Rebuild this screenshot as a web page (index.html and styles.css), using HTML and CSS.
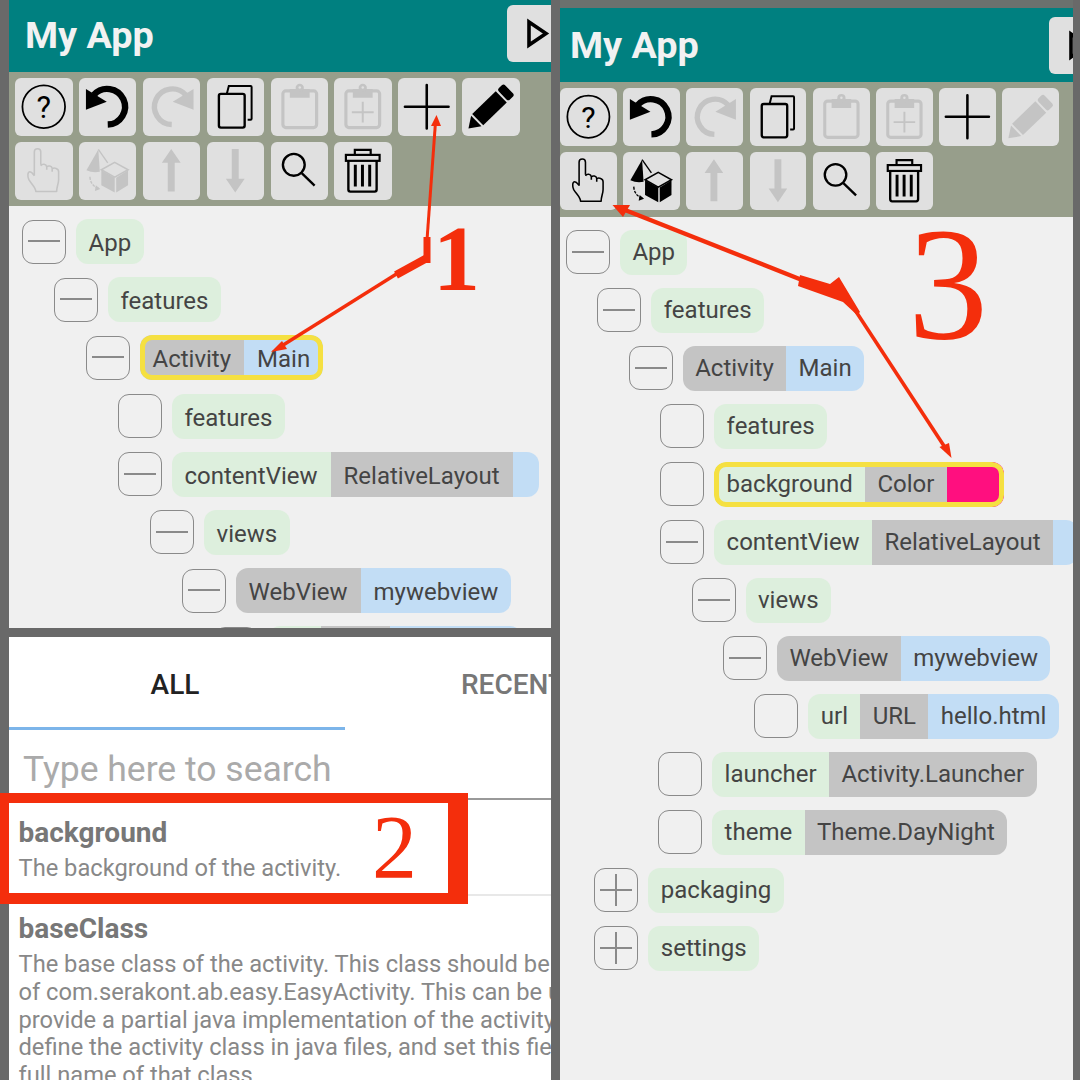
FILE: index.html
```html
<!DOCTYPE html>
<html lang="en">
<head>
    <meta charset="UTF-8" />
    <title>My App - adding a background</title>
    <link rel="stylesheet" href="styles.css">
</head>
<body>

<!-- shared toolbar icons -->
<svg class="defs" width="0" height="0">
    <symbol id="ic-help" viewBox="0 0 58 58">
        <circle cx="29" cy="29" r="21.5" fill="none" stroke="currentColor" stroke-width="1.8"/>
        <text x="29" y="40" text-anchor="middle" font-family="Roboto, sans-serif" font-size="31" fill="currentColor">?</text>
    </symbol>
    <symbol id="ic-undo" viewBox="0 0 58 58">
        <path d="M15 17 A18 18 0 1 1 29 47" fill="none" stroke="currentColor" stroke-width="6.5"/>
        <path d="M7 11 V32 L28 24 Z" fill="currentColor"/>
    </symbol>
    <symbol id="ic-redo" viewBox="0 0 58 58">
        <path d="M43 17 A18 18 0 1 0 29 47" fill="none" stroke="currentColor" stroke-width="5.5"/>
        <path d="M51 11 V32 L30 24 Z" fill="currentColor"/>
    </symbol>
    <symbol id="ic-copy" viewBox="0 0 58 58">
        <rect x="12" y="16" width="26" height="34" rx="2" fill="none" stroke="currentColor" stroke-width="2.4"/>
        <path d="M20 16 L22 8 H44 Q45 8 45 9 V41 Q45 42 44 42 H41" fill="none" stroke="currentColor" stroke-width="2"/>
    </symbol>
    <symbol id="ic-paste" viewBox="0 0 58 58">
        <rect x="12" y="13" width="34" height="37" rx="3" fill="none" stroke="currentColor" stroke-width="3.2"/>
        <path d="M19 11 H39 V20 H19 Z" fill="currentColor"/>
        <circle cx="29" cy="10" r="4.2" fill="currentColor"/>
        <circle cx="29" cy="9.5" r="1.3" fill="#e0e0e0"/>
    </symbol>
    <symbol id="ic-paste-add" viewBox="0 0 58 58">
        <rect x="12" y="13" width="34" height="37" rx="3" fill="none" stroke="currentColor" stroke-width="3.2"/>
        <path d="M19 11 H39 V20 H19 Z" fill="currentColor"/>
        <circle cx="29" cy="10" r="4.2" fill="currentColor"/>
        <circle cx="29" cy="9.5" r="1.3" fill="#e0e0e0"/>
        <path d="M29 24 V45 M18 34.5 H40" fill="none" stroke="currentColor" stroke-width="2"/>
    </symbol>
    <symbol id="ic-plus" viewBox="0 0 58 58">
        <path d="M29 7 V51 M7 29 H51" fill="none" stroke="currentColor" stroke-width="2.6" stroke-linecap="round"/>
    </symbol>
    <symbol id="ic-pencil" viewBox="0 0 58 58">
        <g transform="translate(6.5 51) rotate(-44)" fill="currentColor">
            <path d="M0 0 L11 -7.5 V7.5 Z"/>
            <rect x="13" y="-8" width="33" height="16"/>
            <rect x="48" y="-8" width="9" height="16" rx="2.5"/>
        </g>
    </symbol>
    <symbol id="ic-hand" viewBox="0 0 58 58">
        <path d="M19.5 34 V10 a3.2 3.2 0 0 1 6.5 0 V23 M26 24 c1.5 -2.5 5.5 -2 6 1 V28 M32 25 c1.5 -1.5 5 -1 5.5 1.5 V30 M37.5 27 c2 -1.5 6.5 -0.5 6.5 3 V38 c0 4 -2 7 -2 12 H21 c0 -4 -4 -7 -7 -12 c-1.5 -3 -1.5 -8 1 -8 c2 0 3 2 4.5 4" fill="none" stroke="currentColor" stroke-width="1.6" stroke-linejoin="round"/>
    </symbol>
    <symbol id="ic-cube" viewBox="0 0 58 58">
        <path d="M19.5 7.5 L7.5 28.5 Q14 31.5 21 30 Z" fill="currentColor"/>
        <path d="M19.5 7.5 L29 21" fill="none" stroke="currentColor" stroke-width="1.4"/>
        <path d="M11 35 Q11.5 44 20 47" fill="none" stroke="currentColor" stroke-width="1.4" stroke-dasharray="3 1.2"/>
        <path d="M21.5 47.5 L16 49.5 L17 43.5 Z" fill="currentColor"/>
        <path d="M22.5 28.5 L36 36 V51 L22.5 43.5 Z" fill="currentColor"/>
        <path d="M49.5 28.5 L37.5 36 V51 L49.5 43.5 Z" fill="currentColor"/>
        <path d="M36 20.5 L49.5 28 L36 35.5 L22.5 28 Z" fill="none" stroke="currentColor" stroke-width="1.6"/>
    </symbol>
    <symbol id="ic-up" viewBox="0 0 58 58">
        <path d="M28.5 7 L38 21 H32 V50 H25 V21 H19 Z" fill="currentColor"/>
    </symbol>
    <symbol id="ic-down" viewBox="0 0 58 58">
        <path d="M28.5 51 L38 37 H32 V7 H25 V37 H19 Z" fill="currentColor"/>
    </symbol>
    <symbol id="ic-search" viewBox="0 0 58 58">
        <circle cx="23" cy="23" r="11" fill="none" stroke="currentColor" stroke-width="2.4"/>
        <path d="M31 31.5 L44 44" fill="none" stroke="currentColor" stroke-width="2.4"/>
    </symbol>
    <symbol id="ic-trash" viewBox="0 0 58 58">
        <path d="M21 13 V8 H37 V13" fill="none" stroke="currentColor" stroke-width="2.2"/>
        <rect x="12" y="13" width="34" height="6" fill="none" stroke="currentColor" stroke-width="2.2"/>
        <path d="M14.5 19 V48 Q14.5 50 16.5 50 H41 Q43 50 43 48 V19" fill="none" stroke="currentColor" stroke-width="2.4"/>
        <path d="M21.5 23 V45 M28.7 23 V45 M36 23 V45" fill="none" stroke="currentColor" stroke-width="3"/>
    </symbol>
</svg>

<div class="collage">
    <div class="col">
        <section class="shot shot-tree">
            <header class="appbar">
                <span class="title">My App</span>
                <span class="play"><svg viewBox="0 0 44 57"><path d="M22 17 L39 28.5 L22 40 Z" fill="none" stroke="#000" stroke-width="3.6"/></svg></span>
            </header>
            <div class="toolbar">
                <span class="tool"><svg><use href="#ic-help"/></svg></span>
                <span class="tool"><svg><use href="#ic-undo"/></svg></span>
                <span class="tool off"><svg><use href="#ic-redo"/></svg></span>
                <span class="tool"><svg><use href="#ic-copy"/></svg></span>
                <span class="tool off"><svg><use href="#ic-paste"/></svg></span>
                <span class="tool off"><svg><use href="#ic-paste-add"/></svg></span>
                <span class="tool"><svg><use href="#ic-plus"/></svg></span>
                <span class="tool"><svg><use href="#ic-pencil"/></svg></span>
                <span class="tool off"><svg><use href="#ic-hand"/></svg></span>
                <span class="tool off"><svg><use href="#ic-cube"/></svg></span>
                <span class="tool off"><svg><use href="#ic-up"/></svg></span>
                <span class="tool off"><svg><use href="#ic-down"/></svg></span>
                <span class="tool"><svg><use href="#ic-search"/></svg></span>
                <span class="tool"><svg><use href="#ic-trash"/></svg></span>
            </div>
            <div class="tree">
                <div class="row lv0"><span class="exp minus"></span><span class="pill"><span class="seg name">App</span></span></div>
                <div class="row lv1"><span class="exp minus"></span><span class="pill"><span class="seg name">features</span></span></div>
                <div class="row lv2"><span class="exp minus"></span><span class="pill picked"><span class="seg type">Activity</span><span class="seg val">Main</span></span></div>
                <div class="row lv3"><span class="exp"></span><span class="pill"><span class="seg name">features</span></span></div>
                <div class="row lv3"><span class="exp minus"></span><span class="pill"><span class="seg name">contentView</span><span class="seg type">RelativeLayout</span><span class="seg val"></span></span></div>
                <div class="row lv4"><span class="exp minus"></span><span class="pill"><span class="seg name">views</span></span></div>
                <div class="row lv5"><span class="exp minus"></span><span class="pill"><span class="seg type">WebView</span><span class="seg val">mywebview</span></span></div>
                <div class="row lv6"><span class="exp"></span><span class="pill"><span class="seg name">url</span><span class="seg type">URL</span><span class="seg val">hello.html</span></span></div>
            </div>
        </section>

        <section class="shot shot-picker">
            <div class="tabs">
                <span class="tab active">ALL</span>
                <span class="tab">RECENT</span>
            </div>
            <div class="search">Type here to search</div>
            <div class="item first">
                <div class="item-name">background</div>
                <p class="item-desc">The background of the activity.</p>
            </div>
            <div class="item">
                <div class="item-name">baseClass</div>
                <p class="item-desc">The base class of the activity. This class should be<br>of com.serakont.ab.easy.EasyActivity. This can be used to<br>provide a partial java implementation of the activity, or<br>define the activity class in java files, and set this field to<br>full name of that class.</p>
            </div>
        </section>
    </div>

    <section class="shot shot-result">
        <header class="appbar">
            <span class="title">My App</span>
            <span class="play"><svg viewBox="0 0 44 57"><path d="M22 17 L39 28.5 L22 40 Z" fill="none" stroke="#000" stroke-width="3.6"/></svg></span>
        </header>
        <div class="toolbar">
            <span class="tool"><svg><use href="#ic-help"/></svg></span>
            <span class="tool"><svg><use href="#ic-undo"/></svg></span>
            <span class="tool off"><svg><use href="#ic-redo"/></svg></span>
            <span class="tool"><svg><use href="#ic-copy"/></svg></span>
            <span class="tool off"><svg><use href="#ic-paste"/></svg></span>
            <span class="tool off"><svg><use href="#ic-paste-add"/></svg></span>
            <span class="tool"><svg><use href="#ic-plus"/></svg></span>
            <span class="tool off"><svg><use href="#ic-pencil"/></svg></span>
            <span class="tool"><svg><use href="#ic-hand"/></svg></span>
            <span class="tool"><svg><use href="#ic-cube"/></svg></span>
            <span class="tool off"><svg><use href="#ic-up"/></svg></span>
            <span class="tool off"><svg><use href="#ic-down"/></svg></span>
            <span class="tool"><svg><use href="#ic-search"/></svg></span>
            <span class="tool"><svg><use href="#ic-trash"/></svg></span>
        </div>
        <div class="tree">
            <div class="row lv0"><span class="exp minus"></span><span class="pill"><span class="seg name">App</span></span></div>
            <div class="row lv1"><span class="exp minus"></span><span class="pill"><span class="seg name">features</span></span></div>
            <div class="row lv2"><span class="exp minus"></span><span class="pill"><span class="seg type">Activity</span><span class="seg val">Main</span></span></div>
            <div class="row lv3"><span class="exp"></span><span class="pill"><span class="seg name">features</span></span></div>
            <div class="row lv3"><span class="exp"></span><span class="pill picked"><span class="seg name">background</span><span class="seg type">Color</span><span class="seg swatch"></span></span></div>
            <div class="row lv3"><span class="exp minus"></span><span class="pill"><span class="seg name">contentView</span><span class="seg type">RelativeLayout</span><span class="seg val"></span></span></div>
            <div class="row lv4"><span class="exp minus"></span><span class="pill"><span class="seg name">views</span></span></div>
            <div class="row lv5"><span class="exp minus"></span><span class="pill"><span class="seg type">WebView</span><span class="seg val">mywebview</span></span></div>
            <div class="row lv6"><span class="exp"></span><span class="pill"><span class="seg name">url</span><span class="seg type">URL</span><span class="seg val">hello.html</span></span></div>
            <div class="row lv3 low"><span class="exp"></span><span class="pill"><span class="seg name">launcher</span><span class="seg type">Activity.Launcher</span></span></div>
            <div class="row lv3 low"><span class="exp"></span><span class="pill"><span class="seg name">theme</span><span class="seg type">Theme.DayNight</span></span></div>
            <div class="row lv1 low"><span class="exp plus"></span><span class="pill"><span class="seg name">packaging</span></span></div>
            <div class="row lv1 low"><span class="exp plus"></span><span class="pill"><span class="seg name">settings</span></span></div>
        </div>
    </section>
</div>

<!-- annotations drawn over the screenshots -->
<div class="redbox"></div>
<span class="num num-1">1</span>
<span class="num num-2">2</span>
<span class="num num-3">3</span>
<svg class="arrows" viewBox="0 0 1080 1080">
    <g fill="none" stroke="#f42e0c">
        <path d="M280 347 L398 273" stroke-width="3.4"/>
        <path d="M396 275 L427 258" stroke-width="8"/>
        <path d="M427 263 V237" stroke-width="7"/>
        <path d="M427 240 L435.5 122" stroke-width="3"/>
        <path d="M625 210 L802 280" stroke-width="4.4"/>
        <path d="M855 310 L946 449" stroke-width="3.6"/>
    </g>
    <g fill="#f42e0c">
        <path d="M271 352 L282 341 L287 349 Z"/>
        <path d="M436.5 115 L431 126 L441 126 Z"/>
        <path d="M612.5 205 L630 205 L623 217 Z"/>
        <path d="M800 275 L830 284 L839 277 L860 312 L857 315 L843 302 L798 286 Z"/>
        <path d="M951.5 458 L939.5 447 L949 443 Z"/>
    </g>
</svg>

</body>
</html>
```

FILE: styles.css
```css
* {
    box-sizing: border-box;
}
body {
    margin: 0;
    width: 1080px;
    height: 1080px;
    position: relative;
    overflow: hidden;
    background-color: #696969;
    font-family: Roboto, sans-serif;
}
.defs {
    position: absolute;
}

/* collage columns */
.collage {
    display: flex;
    gap: 9px;
    height: 1080px;
    padding-left: 9px;
}
.col {
    display: flex;
    flex-direction: column;
    gap: 9px;
    width: 542px;
}
.shot {
    overflow: hidden;
    display: flex;
    flex-direction: column;
}
.shot-tree {
    height: 628px;
    --btn: 57.5px;
    --indent: 32px;
}
.shot-result {
    width: 513px;
    height: 1080px;
    border-top: 8px solid #6b716e;
    --btn: 56.8px;
    --indent: 31.4px;
}
.shot-picker {
    height: 443px;
    background-color: #fff;
}

/* app bar */
.appbar {
    flex: none;
    display: flex;
    align-items: flex-start;
    justify-content: space-between;
    background-color: #008080;
}
.shot-tree .appbar {
    height: 72px;
    padding: 5px 0 0 16px;
}
.shot-result .appbar {
    height: 74px;
    padding: 9px 0 0 10px;
}
.title {
    color: #f2f2f2;
    font-weight: 700;
    font-size: 37.8px;
    line-height: 60px;
}
.shot-result .title {
    line-height: 57px;
}
.play {
    display: block;
    height: 57px;
    background-color: #e0e0e0;
    border-radius: 6px 0 0 6px;
}
.shot-tree .play {
    width: 44px;
}
.shot-result .play {
    width: 24px;
    overflow: hidden;
}
.play svg {
    display: block;
    width: 44px;
    height: 57px;
}

/* toolbar */
.toolbar {
    flex: none;
    display: grid;
    grid-template-columns: repeat(8, var(--btn));
    grid-auto-rows: 57.5px;
    column-gap: 6.4px;
    row-gap: 6.5px;
    background-color: #979e8b;
}
.shot-tree .toolbar {
    height: 134px;
    padding: 6px 0 0 6px;
}
.shot-result .toolbar {
    height: 135px;
    padding: 6px 0 0 0;
}
.tool {
    display: block;
    background-color: #e0e0e0;
    border-radius: 6px;
    color: #000;
}
.tool.off {
    color: #c4c4c4;
}
.tool svg {
    display: block;
    width: 100%;
    height: 100%;
}

/* tree */
.tree {
    flex: 1;
    overflow: hidden;
    display: flex;
    flex-direction: column;
    background-color: #f0f0f0;
    gap: 13.2px;
}
.shot-tree .tree {
    padding: 13px 0 0 12.5px;
}
.shot-result .tree {
    padding: 12.5px 0 0 6px;
    gap: 13px;
}
.row {
    flex: none;
    display: flex;
    align-items: center;
    gap: 10px;
    height: 45px;
}
.lv1 { margin-left: var(--indent); }
.lv2 { margin-left: calc(var(--indent) * 2); }
.lv3 { margin-left: calc(var(--indent) * 3); }
.lv4 { margin-left: calc(var(--indent) * 4); }
.lv5 { margin-left: calc(var(--indent) * 5); }
.lv6 { margin-left: calc(var(--indent) * 6); }
/* the right shot is a little crooked, its lower rows sit further left */
.lv3.low { margin-left: calc(var(--indent) * 3 - 2px); }
.lv1.low { margin-left: calc(var(--indent) - 3px); }

.exp {
    flex: none;
    position: relative;
    width: 44px;
    height: 44px;
    border: 1.5px solid #8a8a8a;
    border-radius: 11px;
}
.exp.minus::before, .exp.plus::before {
    content: "";
    position: absolute;
    left: 5px;
    right: 5px;
    top: 19.5px;
    height: 2px;
    background-color: #8a8a8a;
}
.exp.plus::after {
    content: "";
    position: absolute;
    top: 5px;
    bottom: 5px;
    left: 20px;
    width: 2px;
    background-color: #8a8a8a;
}
.pill {
    flex: none;
    position: relative;
    display: flex;
    height: 45px;
    border-radius: 12px;
    overflow: hidden;
    font-size: 24px;
    line-height: 45px;
    color: #444;
}
.shot-tree .pill {
    line-height: 48px;
}
.pill.picked::after {
    content: "";
    position: absolute;
    top: 0;
    right: 0;
    bottom: 0;
    left: 0;
    border: 5px solid #f5e041;
    border-radius: 12px;
}
.seg {
    padding: 0 12.4px;
    min-width: 25px;
}
.shot-tree .seg {
    padding: 0 13px;
}
.name { background-color: #ddefdd; }
.type { background-color: #c4c4c4; }
.val { background-color: #c2ddf5; }
.swatch {
    width: 57px;
    background-color: #ff0f7f;
}

/* property picker */
.tabs {
    flex: none;
    display: flex;
    height: 93px;
}
.tab {
    flex: none;
    width: 336px;
    height: 93px;
    padding-top: 33px;
    text-align: center;
    font-weight: 500;
    font-size: 28px;
    line-height: 30px;
    color: #777;
}
.tab.active {
    padding-right: 4px;
    color: #222;
    border-bottom: 3px solid #7cb5ea;
}
.search {
    flex: none;
    height: 70px;
    padding: 17px 0 0 14px;
    border-bottom: 2px solid #999;
    font-size: 35.5px;
    line-height: 44px;
    color: #aaa;
}
.item {
    flex: none;
    padding: 17px 0 0 9.5px;
    white-space: nowrap;
    color: #888;
}
.item.first {
    height: 96px;
    padding-top: 17px;
    border-bottom: 2px solid #e8e8e8;
}
.item-name {
    font-size: 28px;
    font-weight: 700;
    line-height: 32px;
    color: #777;
}
.item-desc {
    margin: 6px 0 0;
    font-size: 23.7px;
    line-height: 27.8px;
}

/* annotations */
.redbox {
    position: absolute;
    left: 0;
    top: 793px;
    width: 468px;
    height: 111px;
    border-style: solid;
    border-color: #f42e0c;
    border-width: 10px 20px 11px 9px;
}
.num {
    position: absolute;
    font-family: "Liberation Serif", serif;
    line-height: 1;
    color: #f42e0c;
}
.num-1 {
    left: 433px;
    top: 211px;
    font-size: 94px;
    font-weight: 700;
}
.num-2 {
    left: 372px;
    top: 803px;
    font-size: 90px;
}
.num-3 {
    left: 908px;
    top: 204px;
    font-size: 160px;
}
.arrows {
    position: absolute;
    left: 0;
    top: 0;
    width: 1080px;
    height: 1080px;
}
```
